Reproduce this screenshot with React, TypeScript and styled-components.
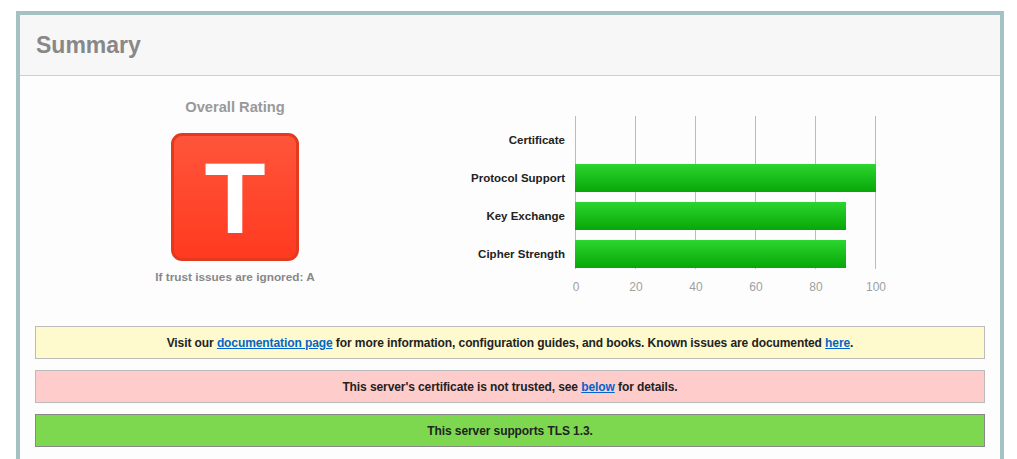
import React from "react";
import styled, { createGlobalStyle } from "styled-components";

const Global = createGlobalStyle`
  html, body { margin: 0; padding: 0; background: #ffffff; }
  body { font-family: "Liberation Sans", Arial, sans-serif; }
`;

const Frame = styled.div`
  box-sizing: border-box;
  width: 988px;
  margin: 11px 0 0 16px;
  border: 4px solid #a6c1c4;
  border-bottom: none;
  background: #fdfdfd;
  height: 460px;
`;

const Header = styled.div`
  height: 61px;
  background: #f7f7f7;
  border-bottom: 1px solid #c8d2d2;
  display: flex;
  align-items: center;
  padding-left: 16px;
  padding-top: 1px;
  box-sizing: border-box;
`;

const Title = styled.h1`
  margin: 0;
  font-size: 23px;
  font-weight: bold;
  color: #888888;
`;

const Body = styled.div`
  padding: 0 15px;
`;

const RatingRow = styled.div`
  display: flex;
  align-items: flex-start;
`;

const RatingCol = styled.div`
  width: 400px;
  display: flex;
  flex-direction: column;
  align-items: center;
  padding-top: 23px;
`;

const RatingLabel = styled.div`
  font-size: 14.7px;
  font-weight: bold;
  color: #999999;
  line-height: 16px;
`;

const Grade = styled.div`
  box-sizing: border-box;
  margin-top: 18px;
  width: 128px;
  height: 128px;
  border: 3px solid #e2391f;
  border-radius: 11px;
  background: linear-gradient(#ff553a, #ff3a20);
  display: flex;
  align-items: center;
  justify-content: center;
  color: #ffffff;
  font-size: 100px;
  font-weight: bold;
  line-height: 1;
  padding-top: 2px;
`;

const GradeNote = styled.div`
  margin-top: 9px;
  font-size: 11.8px;
  font-weight: bold;
  color: #888888;
  line-height: 14px;
`;

const ChartWrap = styled.div`
  margin-left: 5px;
  padding-top: 34px;
`;

const Notice = styled.div<{ $bg: string; $border: string; $first?: boolean }>`
  box-sizing: border-box;
  height: 33px;
  margin-top: ${(p) => (p.$first ? "22px" : "11px")};
  background: ${(p) => p.$bg};
  border: 1px solid ${(p) => p.$border};
  display: flex;
  align-items: center;
  justify-content: center;
  font-size: 12px;
  letter-spacing: -0.09px;
  font-weight: bold;
  color: #222222;
`;

const Link = styled.a`
  color: #0066cc;
  text-decoration: underline;
`;

const rows = [
  { label: "Certificate", value: 0 },
  { label: "Protocol Support", value: 100 },
  { label: "Key Exchange", value: 90 },
  { label: "Cipher Strength", value: 90 },
];

function Chart() {
  const x0 = 135;
  const unit = 3;
  return (
    <svg width="460" height="190" viewBox="0 0 460 190">
      <defs>
        <linearGradient id="barg" x1="0" y1="0" x2="0" y2="1">
          <stop offset="0" stopColor="#2cd530" />
          <stop offset="1" stopColor="#07a707" />
        </linearGradient>
      </defs>
      {[0, 20, 40, 60, 80, 100].map((v) => (
        <g key={v}>
          <line
            x1={x0 + v * unit + 0.5}
            x2={x0 + v * unit + 0.5}
            y1={6}
            y2={159}
            stroke="#bbbbbb"
            strokeWidth="1"
          />
          <text
            x={x0 + v * unit + 1}
            y={177}
            textAnchor="middle"
            dominantBaseline="central"
            fontSize="12"
            fill="#a0a0a0"
            fontFamily="Liberation Sans, Arial, sans-serif"
          >
            {v}
          </text>
        </g>
      ))}
      {rows.map((r, i) => {
        const y = 16 + i * 38;
        return (
          <g key={r.label}>
            <text
              x={125}
              y={y + 14}
              textAnchor="end"
              dominantBaseline="central"
              fontSize="11.5"
              fontWeight="bold"
              fill="#222222"
              fontFamily="Liberation Sans, Arial, sans-serif"
            >
              {r.label}
            </text>
            {r.value > 0 && (
              <rect x={x0} y={y} width={r.value * unit + 1} height={28} fill="url(#barg)" />
            )}
          </g>
        );
      })}
    </svg>
  );
}

export default function App() {
  return (
    <>
      <Global />
      <Frame>
        <Header>
          <Title>Summary</Title>
        </Header>
        <Body>
          <RatingRow>
            <RatingCol>
              <RatingLabel>Overall Rating</RatingLabel>
              <Grade>T</Grade>
              <GradeNote>If trust issues are ignored: A</GradeNote>
            </RatingCol>
            <ChartWrap>
              <Chart />
            </ChartWrap>
          </RatingRow>
          <Notice $bg="#fffacd" $border="#bbbbbb" $first>
            <span>
              Visit our <Link href="#">documentation page</Link> for more information, configuration guides, and
              books. Known issues are documented <Link href="#">here</Link>.
            </span>
          </Notice>
          <Notice $bg="#ffcccc" $border="#bbbbbb">
            <span>
              This server's certificate is not trusted, see <Link href="#">below</Link> for details.
            </span>
          </Notice>
          <Notice $bg="#7dd84f" $border="#888888">
            This server supports TLS 1.3.
          </Notice>
        </Body>
      </Frame>
    </>
  );
}
